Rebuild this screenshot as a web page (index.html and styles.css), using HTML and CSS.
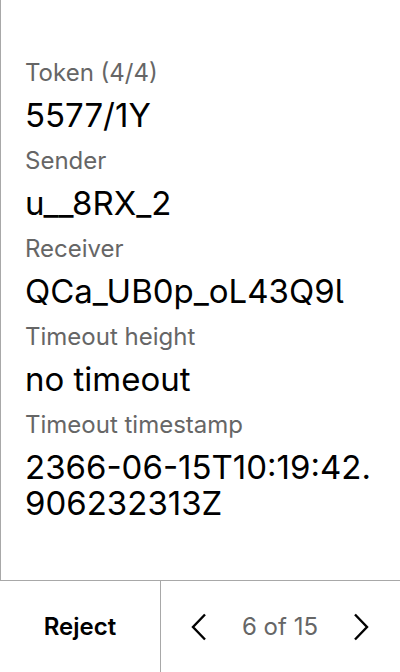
FILE: index.html
```html
<!DOCTYPE html>
<html>
<head>
<meta charset="utf-8">
<link rel="stylesheet" href="styles.css">
</head>
<body>
<div class="screen">
  <main class="details">
    <div class="field">
      <div class="label">Token (4/4)</div>
      <div class="value">5577/1Y</div>
    </div>
    <div class="field">
      <div class="label">Sender</div>
      <div class="value">u__8RX_2</div>
    </div>
    <div class="field">
      <div class="label">Receiver</div>
      <div class="value">QCa_UB0p_oL43Q9l</div>
    </div>
    <div class="field">
      <div class="label">Timeout height</div>
      <div class="value">no timeout</div>
    </div>
    <div class="field">
      <div class="label">Timeout timestamp</div>
      <div class="value">2366-06-15T10:19:42.<br>906232313Z</div>
    </div>
  </main>
  <footer class="bar">
    <div class="reject">Reject</div>
    <div class="pager">
      <svg class="chev" width="16" height="28" viewBox="0 0 16 28"><path d="M14 1.5 L2 14 L14 26.5" fill="none" stroke="#000" stroke-width="2.4"/></svg>
      <span class="count">6 of 15</span>
      <svg class="chev" width="16" height="28" viewBox="0 0 16 28"><path d="M2 1.5 L14 14 L2 26.5" fill="none" stroke="#000" stroke-width="2.4"/></svg>
    </div>
  </footer>
</div>
</body>
</html>
```
FILE: styles.css
```css
html, body {
  margin: 0;
  padding: 0;
  background: #fff;
}
body {
  font-family: Inter, "Noto Sans", sans-serif;
  color: #000;
}
.screen {
  width: 400px;
  height: 672px;
  display: flex;
  flex-direction: column;
}
.details {
  flex: 1;
  border-left: 1px solid #a8a8a8;
  padding: 58px 4px 0 24px;
  display: flex;
  flex-direction: column;
  gap: 13px;
}
.field {
  display: flex;
  flex-direction: column;
  gap: 10px;
}
.label {
  font-size: 24px;
  line-height: 29px;
  color: #666;
}
.value {
  font-size: 33px;
  line-height: 36px;
  color: #000;
  font-feature-settings: "cv05";
}
.bar {
  height: 91px;
  border-top: 1px solid #a8a8a8;
  display: flex;
}
.reject {
  width: 160px;
  border-right: 1px solid #a8a8a8;
  display: flex;
  align-items: center;
  justify-content: center;
  font-size: 24px;
  font-weight: 600;
}
.pager {
  flex: 1;
  display: flex;
  align-items: center;
  justify-content: space-between;
  padding: 0 31px 0 30px;
}
.count {
  font-size: 24px;
  color: #666;
}
.chev {
  display: block;
}
```
